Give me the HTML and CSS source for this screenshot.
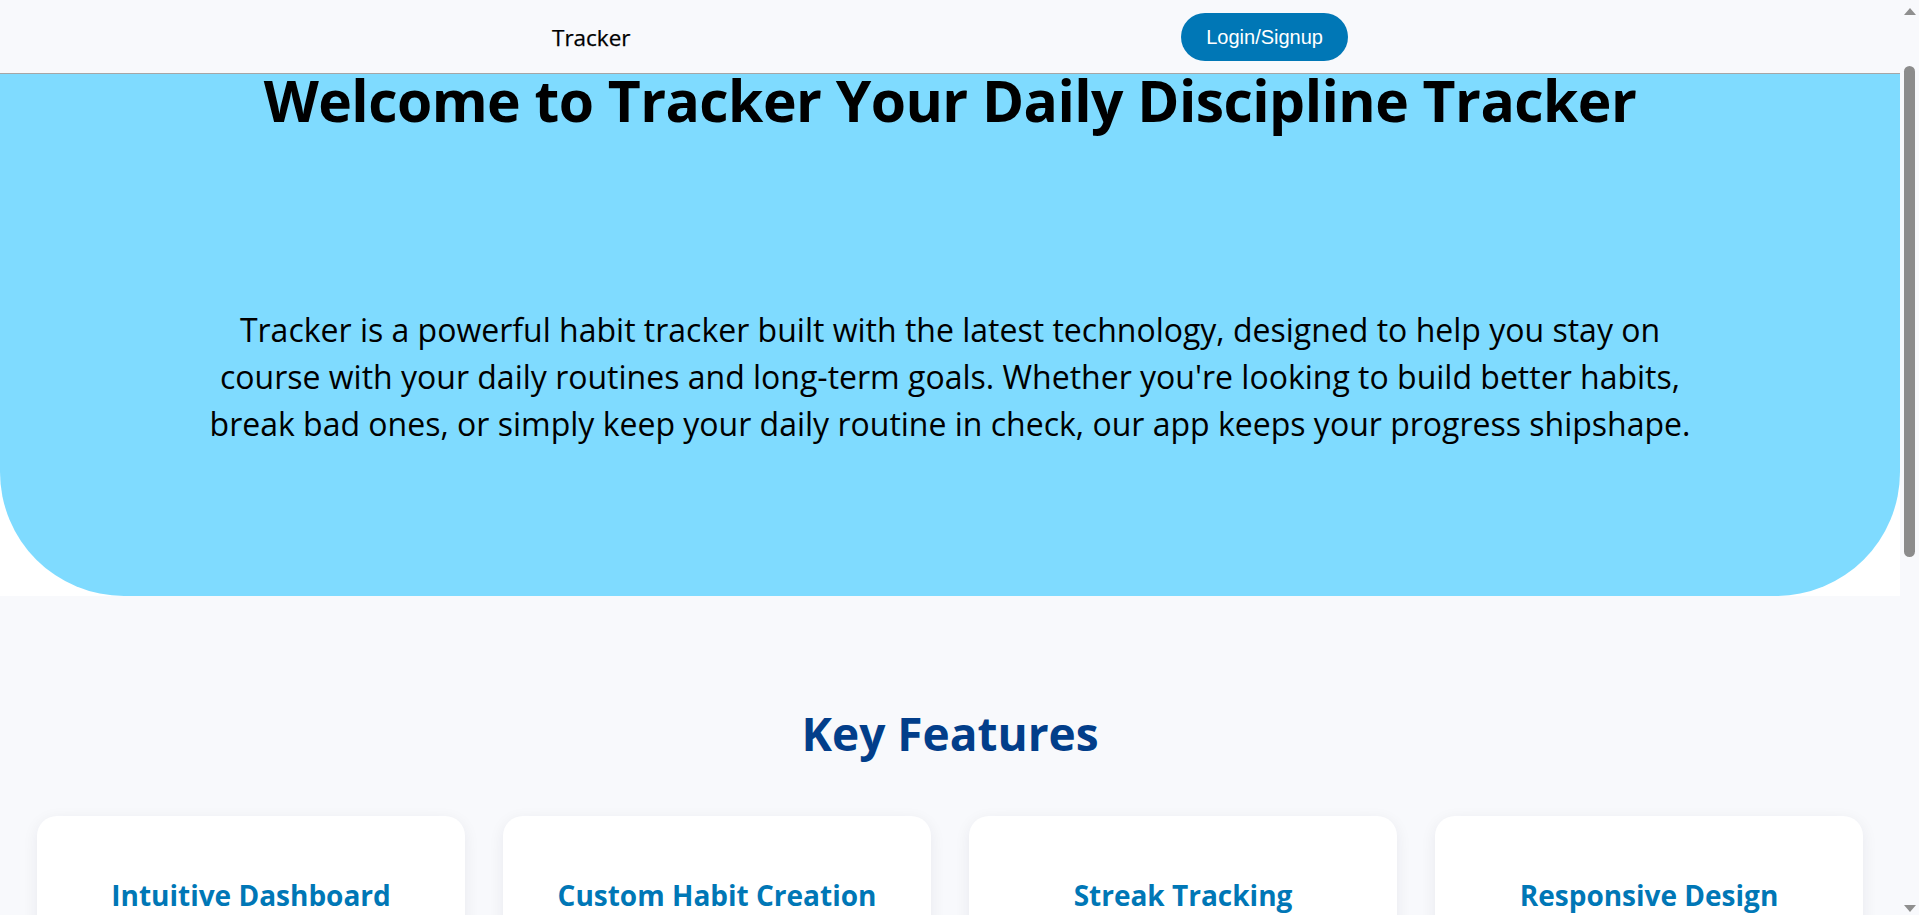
FILE: index.html
```html
<!DOCTYPE html>
<html lang="en">
<head>
<meta charset="utf-8">
<title>Tracker</title>
<link rel="stylesheet" href="styles.css">
</head>
<body>
<nav class="topbar">
  <div class="topbar-inner">
    <span class="brand">Tracker</span>
    <button class="login-btn" type="button">Login/Signup</button>
  </div>
</nav>
<div class="hero-wrap">
  <section class="hero">
    <h1 class="hero-title">Welcome to Tracker Your Daily Discipline Tracker</h1>
    <p class="hero-text">Tracker is a powerful habit tracker built with the latest technology, designed to help you stay on<br>course with your daily routines and long-term goals. Whether you're looking to build better habits,<br>break bad ones, or simply keep your daily routine in check, our app keeps your progress shipshape.</p>
  </section>
</div>
<section class="features">
  <h2 class="features-title">Key Features</h2>
  <div class="feature-grid">
    <article class="feature-card">
      <h3 class="feature-name">Intuitive Dashboard</h3>
      <p class="feature-desc">See all of your habits and today's progress at a glance.</p>
    </article>
    <article class="feature-card">
      <h3 class="feature-name">Custom Habit Creation</h3>
      <p class="feature-desc">Create habits that fit your goals, schedule and routine.</p>
    </article>
    <article class="feature-card">
      <h3 class="feature-name">Streak Tracking</h3>
      <p class="feature-desc">Keep your momentum going by tracking your daily streaks.</p>
    </article>
    <article class="feature-card">
      <h3 class="feature-name">Responsive Design</h3>
      <p class="feature-desc">Use Tracker on any device, from phone to desktop.</p>
    </article>
  </div>
</section>
<div class="scrollbar" aria-hidden="true">
  <span class="scroll-arrow scroll-arrow-up"></span>
  <span class="scroll-thumb"></span>
  <span class="scroll-arrow scroll-arrow-down"></span>
</div>
</body>
</html>
```

FILE: styles.css
```css
* {
  box-sizing: border-box;
}

html {
  background: #f8f9fc;
}

body {
  margin: 0 19px 0 0;
  background: #f8f9fc;
  font-family: "Open Sans", "Noto Sans", sans-serif;
  color: #000;
}

.topbar {
  height: 74px;
  border-bottom: 1px solid #a6a6a6;
  background: #f8f9fc;
  display: flex;
  align-items: center;
}

.topbar-inner {
  width: 796px;
  margin: 0 auto;
  display: flex;
  justify-content: space-between;
  align-items: center;
}

.brand {
  font-size: 22.5px;
  font-weight: 500;
  line-height: 30px;
  padding-top: 2px;
  -webkit-text-stroke: 0.25px #000;
}

.login-btn {
  font-family: "Liberation Sans", Arial, sans-serif;
  font-size: 20px;
  line-height: 24px;
  color: #fff;
  background: #0077b6;
  border: none;
  border-radius: 24px;
  padding: 12px 25px;
  margin: 0;
}

.hero-wrap {
  background: #fff;
}

.hero {
  background: #7fdbff;
  border-radius: 0 0 124px 124px;
  padding: 0 0 149px;
  text-align: center;
}

.hero-title {
  margin: 0;
  font-size: 57px;
  font-weight: 700;
  line-height: 52px;
  letter-spacing: -0.55px;
}

.hero-text {
  margin: 180px auto 0;
  font-size: 32px;
  line-height: 47px;
  font-weight: 400;
}

.features {
  padding: 109px 37px 60px;
}

.features-title {
  margin: 0;
  text-align: center;
  font-size: 46px;
  line-height: 56px;
  font-weight: 700;
  color: #023e8a;
}

.feature-grid {
  margin-top: 55px;
  display: grid;
  grid-template-columns: repeat(4, 1fr);
  gap: 38px;
}

.feature-card {
  background: #fff;
  border-radius: 20px;
  box-shadow: 0 4px 16px rgba(20, 30, 60, 0.07);
  padding: 61px 24px 40px;
  text-align: center;
}

.feature-name {
  margin: 0;
  font-size: 28px;
  line-height: 36px;
  font-weight: 700;
  color: #0077b6;
}

.feature-desc {
  margin: 24px 0 0;
  font-size: 18px;
  line-height: 28px;
  color: #333;
}

.scrollbar {
  position: fixed;
  top: 0;
  right: 0;
  width: 19px;
  height: 100vh;
  background: #f8f9fc;
  display: flex;
  flex-direction: column;
  align-items: center;
  padding: 8px 0 3px;
}

.scroll-arrow {
  width: 0;
  height: 0;
  border-left: 6.5px solid transparent;
  border-right: 6.5px solid transparent;
}

.scroll-arrow-up {
  border-bottom: 7px solid #8f8f8f;
}

.scroll-arrow-down {
  margin-top: auto;
  border-top: 7px solid #8f8f8f;
}

.scroll-thumb {
  width: 11px;
  height: 491px;
  margin-top: 51px;
  border-radius: 6px;
  background: #8c8c8c;
}
```
